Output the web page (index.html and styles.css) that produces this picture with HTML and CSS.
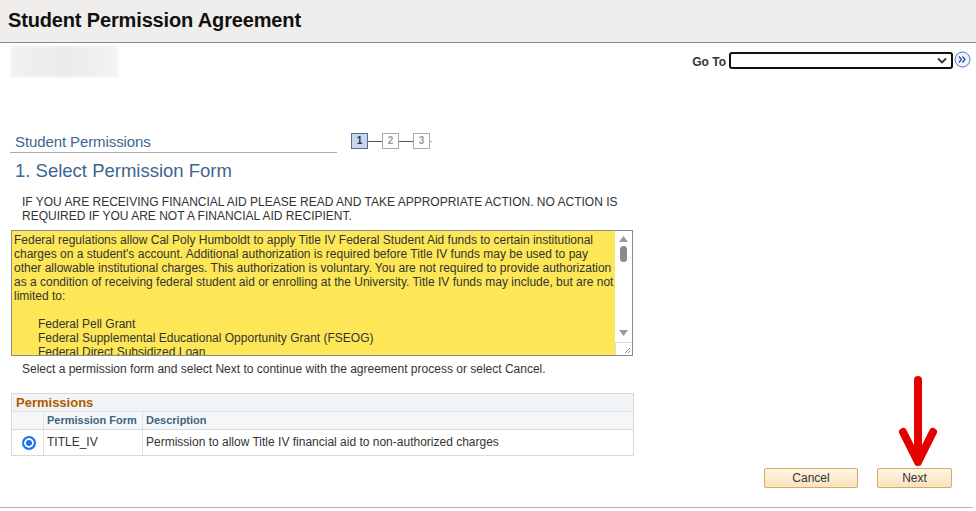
FILE: index.html
```html
<!DOCTYPE html>
<html>
<head>
<meta charset="utf-8">
<title>Student Permission Agreement</title>
<link rel="stylesheet" href="styles.css">
</head>
<body>
<div class="header"><h1 class="title">Student Permission Agreement</h1></div>
<div class="topbar">
  <div class="blurbox"></div>
  <div class="goto">
    <span class="goto-label">Go To</span>
    <div class="goto-select"><svg class="chev" width="10" height="7" viewBox="0 0 10 7"><path d="M1 1.5 L5 5.5 L9 1.5" fill="none" stroke="#333" stroke-width="1.8"/></svg></div>
    <svg class="goto-btn" width="17" height="17" viewBox="0 0 17 17"><circle cx="8.5" cy="8.5" r="7.5" fill="#eef2fb" stroke="#4a6fc0" stroke-width="1"/><path d="M5 5.5 L7.5 8.5 L5 11.5 M8.5 5.5 L11 8.5 L8.5 11.5" fill="none" stroke="#2a4fa8" stroke-width="1.3"/></svg>
  </div>
</div>
<div class="content">
  <div class="steps-row">
    <div class="section-title">Student Permissions</div>
    <div class="steps">
      <span class="step active">1</span><span class="link"></span><span class="step">2</span><span class="link"></span><span class="step">3</span><span class="link short"></span>
    </div>
  </div>
  <h2 class="page-heading">1. Select Permission Form</h2>
  <p class="notice">IF YOU ARE RECEIVING FINANCIAL AID PLEASE READ AND TAKE APPROPRIATE ACTION. NO ACTION IS REQUIRED IF YOU ARE NOT A FINANCIAL AID RECIPIENT.</p>
  <div class="textbox">
    <div class="textbox-text">
      <p>Federal regulations allow Cal Poly Humboldt to apply Title IV Federal Student Aid funds to certain institutional<br>charges on a student's account. Additional authorization is required before Title IV funds may be used to pay<br>other allowable institutional charges. This authorization is voluntary. You are not required to provide authorization<br>as a condition of receiving federal student aid or enrolling at the University. Title IV funds may include, but are not<br>limited to:</p>
      <p class="gap"></p>
      <p class="item">Federal Pell Grant</p>
      <p class="item">Federal Supplemental Educational Opportunity Grant (FSEOG)</p>
      <p class="item">Federal Direct Subsidized Loan</p>
    </div>
    <div class="scrollbar">
      <svg class="arr-up" width="9" height="6" viewBox="0 0 9 6"><path d="M0 6 L4.5 0 L9 6 Z" fill="#9a9a9a"/></svg>
      <div class="thumb"></div>
      <div class="track"></div>
      <svg class="arr-down" width="9" height="6" viewBox="0 0 9 6"><path d="M0 0 L4.5 6 L9 0 Z" fill="#9a9a9a"/></svg>
      <div class="grip"><svg width="8" height="8" viewBox="0 0 8 8"><path d="M7 2 L2 7 M7 5 L5 7" stroke="#888" stroke-width="1"/></svg></div>
    </div>
  </div>
  <p class="instr">Select a permission form and select Next to continue with the agreement process or select Cancel.</p>
  <div class="grid">
    <div class="grid-title">Permissions</div>
    <div class="grid-row grid-head">
      <div class="c1"></div>
      <div class="c2">Permission Form</div>
      <div class="c3">Description</div>
    </div>
    <div class="grid-row grid-data">
      <div class="c1"><span class="radio"></span></div>
      <div class="c2">TITLE_IV</div>
      <div class="c3">Permission to allow Title IV financial aid to non-authorized charges</div>
    </div>
  </div>
  <div class="buttons">
    <button class="btn cancel">Cancel</button>
    <button class="btn next">Next</button>
  </div>
</div>
<div class="footer-line"></div>
<svg class="red-arrow" width="40" height="96" viewBox="0 0 40 96"><path d="M20 6 L20 88 M5 58 L20 88 L35 58" fill="none" stroke="#e60000" stroke-width="8" stroke-linecap="round" stroke-linejoin="round"/></svg>
</body>
</html>
```
FILE: styles.css
```css
html, body { margin: 0; padding: 0; background: #fff; }
body { font-family: "Liberation Sans", Arial, sans-serif; color: #333; position: relative; width: 976px; height: 511px; overflow: hidden; }
.header { background: #efeeec; height: 42px; border-bottom: 1px solid #8c8a88; }
.title { margin: 0; padding-left: 8px; font-size: 20px; font-weight: bold; color: #111; line-height: 40px; letter-spacing: -0.15px; }
.topbar { display: flex; justify-content: space-between; align-items: flex-start; padding: 3px 5px 0 11px; height: 85px; }
.blurbox { width: 107px; height: 31px; background: linear-gradient(90deg, #f1f1f1, #ebebeb 50%, #f3f3f3); filter: blur(1px); }
.goto { display: flex; align-items: center; margin-top: 5px; }
.goto-label { font-size: 12px; font-weight: bold; color: #333; margin-right: 3px; margin-top: 4px; }
.goto-select { width: 216px; height: 13px; border: 2px solid #111; border-radius: 3px; display: flex; align-items: center; justify-content: flex-end; padding-right: 4px; }
.goto-btn { margin-left: 1px; margin-top: -2px; }
.content { padding-left: 10px; }
.steps-row { display: flex; align-items: flex-end; height: 22px; }
.section-title { width: 322px; padding-left: 5px; font-size: 15px; color: #3b6690; border-bottom: 1px solid #aaa; line-height: 18px; padding-bottom: 1px; letter-spacing: -0.1px; }
.steps { display: flex; align-items: center; margin-left: 14px; margin-bottom: 4px; }
.step { width: 15px; height: 14px; border: 1px solid #aaa; background: #fff; color: #999; font-size: 10px; font-weight: bold; text-align: center; line-height: 14px; }
.step.active { background: #c8d6e8; border-color: #4f6f96; color: #1b2e55; }
.link { width: 14px; height: 1px; background: #555; }
.link.short { width: 2px; background: #aaa; }
.page-heading { margin: 7px 0 0 5px; font-size: 18.5px; font-weight: normal; color: #3b6690; line-height: 22px; }
.notice { margin: 13px 0 0 12px; font-size: 12px; line-height: 14px; color: #333; width: 610px; }
.textbox { margin: 7px 0 0 1px; width: 620px; height: 124px; border: 1px solid #8a8a8a; background: #fde757; display: flex; overflow: hidden; }
.textbox-text { flex: 1; padding: 2px 0 0 2px; font-size: 12px; line-height: 14px; color: #333; overflow: hidden; white-space: nowrap; }
.textbox-text p { margin: 0; }
.textbox-text .gap { height: 14px; }
.textbox-text .item { padding-left: 24px; }
.scrollbar { width: 17px; background: #fff; display: flex; flex-direction: column; align-items: center; }
.arr-up { margin-top: 5px; }
.thumb { width: 7px; height: 16px; background: #8a8a8a; border-radius: 4px; margin-top: 4px; }
.track { flex: 1; }
.arr-down { margin-bottom: 6px; }
.grip { width: 17px; height: 13px; display: flex; justify-content: flex-end; align-items: flex-end; border-top: 1px solid #ddd; border-left: 1px solid #ddd; box-sizing: border-box; padding: 0 1px 1px 0; }
.instr { margin: 6px 0 0 12px; font-size: 12px; line-height: 14px; color: #333; }
.grid { margin: 17px 0 0 1px; width: 621px; border: 1px solid #d6d8da; }
.grid-title { background: #f1f4f6; color: #b05a00; font-weight: bold; font-size: 13px; line-height: 16px; padding: 1px 4px 0; border-bottom: 1px solid #dfe2e4; }
.grid-row { display: flex; }
.grid-head { background: #f6f7f8; font-size: 11px; font-weight: bold; color: #3c6483; height: 17px; line-height: 17px; border-bottom: 1px solid #d6d8da; }
.grid-data { background: #fff; font-size: 12px; color: #333; height: 25px; line-height: 25px; }
.c1 { width: 31px; border-right: 1px solid #dfe2e4; display: flex; align-items: center; justify-content: center; }
.c2 { width: 99px; padding-left: 3px; box-sizing: border-box; border-right: 1px solid #dfe2e4; }
.c3 { flex: 1; padding-left: 3px; }
.radio { width: 10px; height: 10px; border: 2px solid #1a73e8; border-radius: 50%; box-sizing: content-box; background: #1a73e8; box-shadow: inset 0 0 0 2px #fff; margin-left: 2px; }
.buttons { display: flex; justify-content: flex-end; gap: 19px; margin: 12px 24px 0 0; }
.btn { font-family: "Liberation Sans", Arial, sans-serif; font-size: 12px; color: #333; height: 20px; padding: 0; border: 1px solid #d6a86c; border-radius: 2px; background: linear-gradient(#fdf4e2, #fae3bd); }
.cancel { width: 94px; }
.next { width: 75px; }
.footer-line { position: absolute; left: 0; top: 507px; width: 973px; height: 1px; background: #b5b5b5; }
.red-arrow { position: absolute; left: 898px; top: 374px; }
```
